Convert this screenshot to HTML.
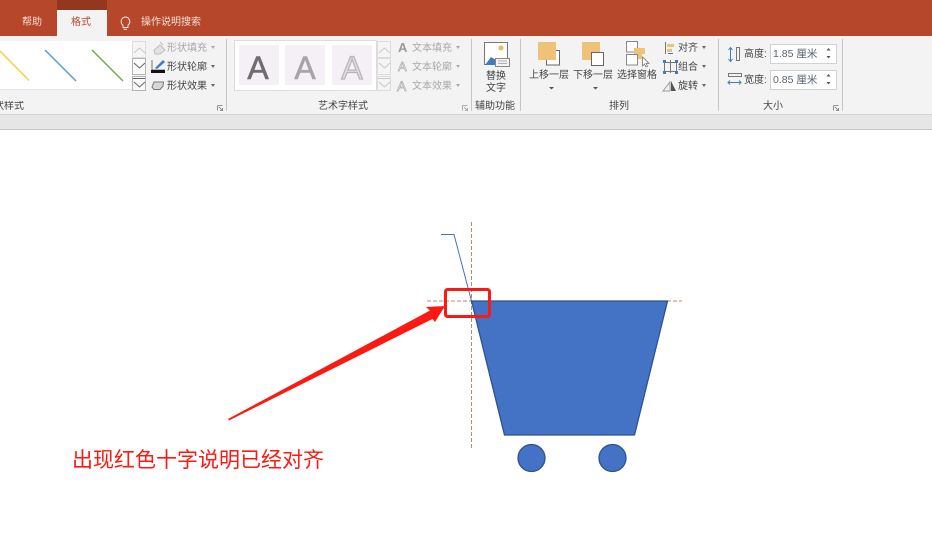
<!DOCTYPE html>
<html><head><meta charset="utf-8">
<style>
html,body{margin:0;padding:0;background:#fff}
#p{position:relative;width:932px;height:540px;overflow:hidden;background:#fff;font-family:"Liberation Sans","Noto Sans CJK SC",sans-serif}
.t{position:absolute;font-size:10px;line-height:12px;color:#444;white-space:nowrap}
.g{color:#a8a8a8}
.b{position:absolute}
.d{display:inline-block;width:0;height:0;border:2px solid transparent;border-top:3px solid #666;border-bottom:0;margin-left:4px;vertical-align:2px}
.g .d{border-top-color:#aaa}
svg{position:absolute;left:0;top:0}
</style></head><body><div id="p">
<div class="b" style="left:0;top:0;width:932px;height:36px;background:#b7472a"></div>
<div class="b" style="left:57px;top:0;width:50px;height:10px;background:#93371f"></div>
<div class="b" style="left:57px;top:10px;width:50px;height:26px;background:#f3f3f3"></div>
<div class="b" style="left:0;top:36px;width:932px;height:78px;background:#f3f3f3"></div>
<div class="b" style="left:0;top:114px;width:932px;height:1px;background:#d4d4d4"></div>
<div class="b" style="left:0;top:115px;width:932px;height:14px;background:#e6e6e6"></div>
<div class="b" style="left:0;top:129px;width:932px;height:1px;background:#c8c8c8"></div>

<div class="t" style="left:22px;top:17px;color:#f3e0da">帮助</div>
<div class="t" style="left:71px;top:17px;color:#b7472a">格式</div>
<div class="t" style="left:141px;top:17px;color:#f3e0da">操作说明搜索</div>

<div class="b" style="left:0;top:41px;width:132px;height:49px;background:#fff;border-bottom:1px solid #e4e4e4;box-sizing:border-box"></div>
<div class="b" style="left:234px;top:40px;width:143px;height:51px;background:#fff;border:1px solid #dcdcdc;box-sizing:border-box"></div>
<div class="b" style="left:239px;top:45px;width:40px;height:40px;background:#f5f0f5"></div>
<div class="b" style="left:285px;top:45px;width:40px;height:40px;background:#f5f0f5"></div>
<div class="b" style="left:332px;top:45px;width:40px;height:40px;background:#f5f0f5"></div>
<div class="t" style="left:243px;top:49px;width:30px;text-align:center;font-size:32px;line-height:38px;color:#6e6e6e;-webkit-text-stroke:.6px #6e6e6e">A</div>
<div class="t" style="left:290px;top:49px;width:30px;text-align:center;font-size:32px;line-height:38px;color:#a5a5a5;-webkit-text-stroke:.6px #a5a5a5">A</div>
<div class="t" style="left:337px;top:49px;width:30px;text-align:center;font-size:32px;line-height:38px;color:#e0dce0;-webkit-text-stroke:1.2px #b4b4b4">A</div>

<div class="t g" style="left:167px;top:43px">形状填充<span class="d"></span></div>
<div class="t" style="left:167px;top:62px">形状轮廓<span class="d"></span></div>
<div class="t" style="left:167px;top:81px">形状效果<span class="d"></span></div>
<div class="t" style="left:0;top:101px;width:24px;overflow:hidden;direction:rtl">状样式</div>
<div class="t" style="left:318px;top:101px">艺术字样式</div>
<div class="t" style="left:475px;top:101px">辅助功能</div>
<div class="t" style="left:609px;top:101px">排列</div>
<div class="t" style="left:763px;top:101px">大小</div>

<div class="t g" style="left:412px;top:43px">文本填充<span class="d"></span></div>
<div class="t g" style="left:412px;top:62px">文本轮廓<span class="d"></span></div>
<div class="t g" style="left:412px;top:81px">文本效果<span class="d"></span></div>
<div class="t g" style="left:398px;top:41px;font-size:13px;line-height:14px;font-weight:bold;color:#999">A</div>
<div class="t g" style="left:398px;top:60px;font-size:13px;line-height:14px;color:#fff;-webkit-text-stroke:.7px #aaa">A</div>
<div class="t g" style="left:397px;top:79px;font-size:14px;line-height:14px;color:#fff;-webkit-text-stroke:.7px #aaa">A</div>

<div class="t" style="left:486px;top:71px">替换</div>
<div class="t" style="left:486px;top:83px">文字</div>
<div class="t" style="left:529px;top:70px">上移一层</div>
<div class="t" style="left:573px;top:70px">下移一层</div>
<div class="t" style="left:617px;top:70px">选择窗格</div>
<div class="t" style="left:678px;top:43px">对齐<span class="d"></span></div>
<div class="t" style="left:678px;top:62px">组合<span class="d"></span></div>
<div class="t" style="left:678px;top:81px">旋转<span class="d"></span></div>
<div class="t" style="left:744px;top:49px">高度:</div>
<div class="t" style="left:744px;top:75px">宽度:</div>

<div class="b" style="left:770px;top:44px;width:67px;height:20px;background:#fff;border:1px solid #d2d2d2;box-sizing:border-box"></div>
<div class="b" style="left:770px;top:70px;width:67px;height:20px;background:#fff;border:1px solid #d2d2d2;box-sizing:border-box"></div>
<div class="t" style="left:773px;top:48px;font-size:10.5px;color:#5a6570">1.85 厘米</div>
<div class="t" style="left:773px;top:74px;font-size:10.5px;color:#5a6570">0.85 厘米</div>

<svg width="932" height="540" viewBox="0 0 932 540" fill="none">
<path d="M125 17a4.600 4.600 0 0 1 3 8.200v2.300h-5v-2.300a4.600 4.600 0 0 1 2-8.200zM123.500 29.200h3.500" stroke="#f5e6e0" stroke-width="1"/>
<path d="M0 51L29 80.500" stroke="#f5cf45" stroke-width="1.500"/>
<path d="M45 50L76 81" stroke="#5b9bd5" stroke-width="1.500"/>
<path d="M92 50L123 81" stroke="#70ad47" stroke-width="1.500"/>
<g stroke-width="1">
<path d="M132.500 41.500h13v16h-13z" stroke="#dcdcdc" fill="#f5f5f5"/><path d="M134 53l5.500-5 5.500 5" stroke="#c8c8c8"/>
<path d="M132.500 58.500h13v16h-13z" stroke="#b4b4b4" fill="#fafafa"/><path d="M134 63l5.500 5 5.500-5" stroke="#666"/>
<path d="M132.500 76.500h13v14h-13z" stroke="#b4b4b4" fill="#fafafa"/><path d="M133 78.500h12M134 82l5.500 5 5.500-5" stroke="#666"/>
<path d="M377.500 41.500h13v16h-13z" stroke="#dcdcdc" fill="#f5f5f5"/><path d="M379 53l5.500-5 5.500 5" stroke="#c8c8c8"/>
<path d="M377.500 58.500h13v16h-13z" stroke="#dcdcdc" fill="#f5f5f5"/><path d="M379 63l5.500 5 5.500-5" stroke="#c8c8c8"/>
<path d="M377.500 76.500h13v14h-13z" stroke="#dcdcdc" fill="#f5f5f5"/><path d="M378 78.500h12M379 82l5.500 5 5.500-5" stroke="#c8c8c8"/>
</g>
<path d="M226.500 39v72M471.500 39v72M520.500 39v72M718.500 39v72M842.500 39v72" stroke="#c6c6c6"/>
<path d="M217.500 105.500h5M217.500 105.500v5M219 107l3.500 3.500M222.500 108v2.500H220" stroke="#777" stroke-width=".8"/>
<path d="M462.500 105.500h5M462.500 105.500v5M464 107l3.500 3.500M467.500 108v2.500H465" stroke="#999" stroke-width=".8"/>
<path d="M833.500 105.500h5M833.500 105.500v5M835 107l3.500 3.500M838.500 108v2.500H836" stroke="#777" stroke-width=".8"/>
<path d="M154 50l6-5 5 5-5 4h-5z" fill="#e2e2e2" stroke="#bdbdbd"/><path d="M160 42l3 3" stroke="#bdbdbd"/>
<path d="M152 60v10h13" stroke="#777"/><path d="M155 68l8-8 2 2-8 7z" fill="#3f7cbf"/><rect x="151" y="70" width="14" height="3" fill="#111"/>
<path d="M152 87l2-5h9.500l-.5 4-3 3.500h-6z" fill="#d8d8d8" stroke="#777"/>
<path d="M484.500 42.500h23v22h-23z" fill="#fff" stroke="#777"/>
<circle cx="501" cy="48" r="2.500" fill="#ecb95e"/>
<path d="M485 65l6-8 5 3 5 5z" fill="#3f7cbf"/>
<rect x="495.500" y="58.500" width="14" height="8" fill="#f3f3f3" stroke="#888"/>
<path d="M498 61h9M498 63.500h9" stroke="#999" stroke-width=".7"/>
<rect x="546.500" y="50.500" width="13" height="14.500" fill="#fff" stroke="#666"/>
<rect x="538" y="42" width="18" height="18" fill="#efc377"/>
<rect x="582" y="42" width="18" height="18" fill="#efc377"/>
<rect x="591.500" y="52.500" width="12" height="13" fill="#fff" stroke="#666"/>
<path d="M549 87h5l-2.500 2.500zM593 87h5l-2.500 2.500z" fill="#555"/>
<rect x="626.500" y="41.500" width="11" height="10.500" fill="#fff" stroke="#888"/>
<rect x="626.500" y="54.500" width="11" height="10.500" fill="#fff" stroke="#888"/>
<rect x="634" y="48" width="11" height="6" fill="#efc377"/><rect x="638" y="54" width="4" height="5" fill="#efc377"/>
<path d="M642.500 57v9l2-2 1.500 3 1.500-.7-1.500-3h3z" fill="#fff" stroke="#777" stroke-width=".8"/>
<path d="M665.500 42v12" stroke="#777"/><rect x="667" y="44" width="7" height="3" fill="#efc377"/><rect x="667" y="49" width="5" height="3" fill="#efc377"/><path d="M668 53.500h5" stroke="#3f7cbf"/>
<rect x="664.500" y="62.500" width="12" height="9" stroke="#777"/><path d="M670.500 60v13" stroke="#777"/>
<path d="M663 60h3v3h-3zM675 60h3v3h-3zM663 71h3v3h-3zM675 71h3v3h-3z" fill="#3f7cbf"/>
<path d="M663 91l7-9v9z" stroke="#999"/><path d="M671 91v-10l5 10z" fill="#555"/>
<path d="M730.500 48v13M728.500 50l2-2.500 2 2.500M728.500 59l2 2.500 2-2.500" stroke="#3f7cbf"/>
<rect x="736.500" y="47.500" width="3" height="13" stroke="#777"/>
<rect x="728.500" y="73.500" width="13" height="3" stroke="#777"/>
<path d="M728 82.500h13M730 80.500l-2 2 2 2M739 80.500l2 2-2 2" stroke="#3f7cbf"/>
<path d="M826.500 50.500l2-2.500 2 2.500zM826.500 56l2 2.500 2-2.500zM826.500 76.500l2-2.500 2 2.500zM826.500 82l2 2.500 2-2.500z" fill="#555"/>

<path d="M471.500 222V448" stroke="#b58a78" stroke-width="1" stroke-dasharray="4 2"/>
<path d="M427 301H682" stroke="#b8897a" stroke-width="1" stroke-dasharray="4 2"/>
<path d="M441 234.500H454L471.500 301" stroke="#4472c4" stroke-width="1"/>
<path d="M471.500 301H667.500L634.500 435H504.500Z" fill="#4472c4" stroke="#2f528f" stroke-width="1.300"/>
<circle cx="531.500" cy="458" r="13.500" fill="#4472c4" stroke="#2f528f" stroke-width="1.300"/>
<circle cx="612.500" cy="458" r="13.500" fill="#4472c4" stroke="#2f528f" stroke-width="1.300"/>
<rect x="445.500" y="289.500" width="44" height="27" rx="2" stroke="#fb1a12" stroke-width="3"/>
<path d="M228 419L430 310.500L426 307L445 306L435 322L432.500 319L229 420.500Z" fill="#fb1a12"/>
</svg>
<div class="t" style="left:72px;top:449px;font-size:21px;line-height:24px;color:#fb1a12">出现红色十字说明已经对齐</div>
</div></body></html>
